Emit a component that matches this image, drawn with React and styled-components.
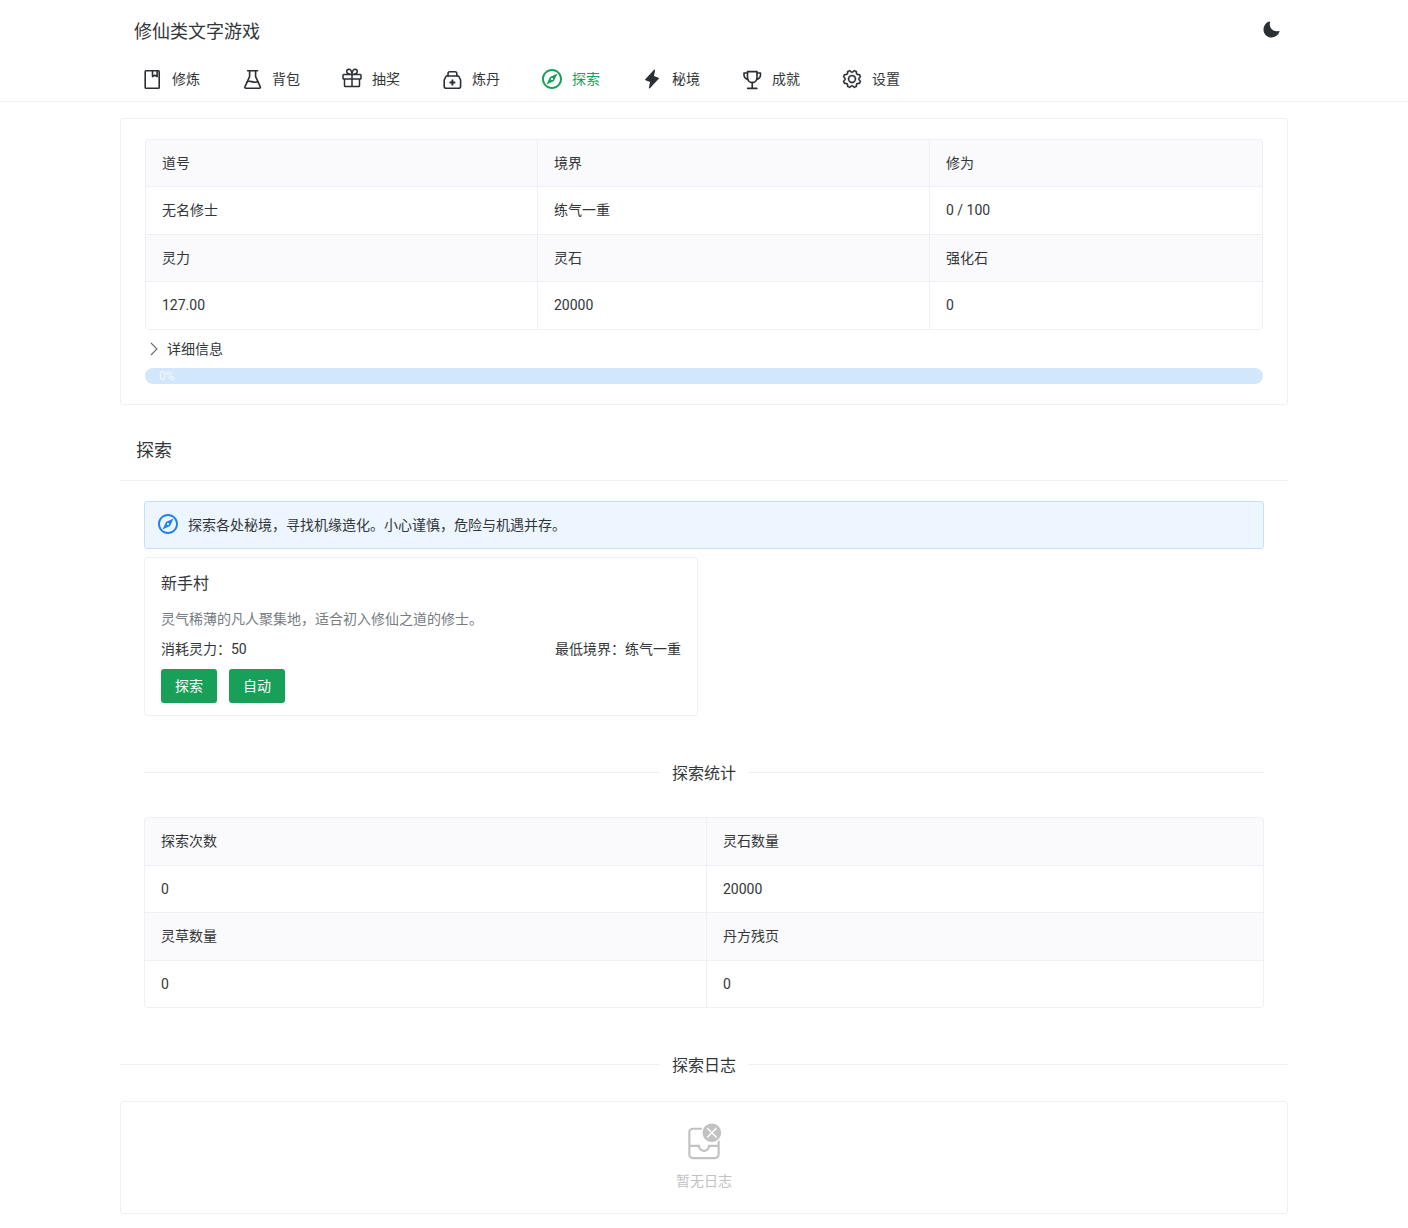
import React from "react";
import styled, { createGlobalStyle } from "styled-components";
import { PiGift, PiGear, PiLightningFill, PiMoonFill } from "react-icons/pi";
import { MdOutlineExplore } from "react-icons/md";

const GlobalStyle = createGlobalStyle`
  html, body {
    margin: 0;
    padding: 0;
    background: #fff;
    color: #333639;
    font-family: Roboto, "Noto Sans CJK SC", sans-serif;
    font-size: 14px;
  }
  * { box-sizing: border-box; }
`;

const Header = styled.header`
  height: 102px;
  border-bottom: 1px solid #efeff5;
`;

const HeaderInner = styled.div`
  width: 1168px;
  margin: 0 auto;
`;

const TitleRow = styled.div`
  display: flex;
  justify-content: space-between;
  align-items: center;
  height: 56px;
  padding: 8px 7px 0 14px;
`;

const Title = styled.div`
  font-size: 18px;
  line-height: 34px;
`;

const ThemeButton = styled.div`
  display: flex;
  margin-top: -4px;
  font-size: 20px;
  color: #2b2f33;
`;

const Nav = styled.nav`
  display: flex;
  height: 45px;
`;

const NavItem = styled.div`
  display: flex;
  align-items: center;
  gap: 8px;
  width: 100px;
  padding: 0 20px;
  line-height: 22px;
  color: ${(p) => (p.$active ? "#18a058" : "#333639")};
  svg {
    flex: none;
    font-size: 24px;
    color: ${(p) => (p.$active ? "#18a058" : "#2b2f33")};
  }
`;

const Glyph = styled.svg`
  width: 1em;
  height: 1em;
  fill: none;
  stroke: currentColor;
  stroke-width: 1.6;
  stroke-linejoin: round;
  stroke-linecap: round;
`;

const FlashIcon = styled(PiLightningFill)`
  && {
    font-size: 20px;
    margin: 0 2px;
  }
`;

const GearIcon = styled(PiGear)`
  && {
    font-size: 22px;
    margin: 0 1px;
    stroke-width: 3;
  }
`;

const Main = styled.main`
  width: 1168px;
  margin: 0 auto;
  padding: 16px 0 14px;
`;

const Card = styled.section`
  border: 1px solid #efeff5;
  border-radius: 3px;
  padding: 20px 24px;
`;

const Table = styled.div`
  display: grid;
  grid-template-columns: ${(p) => p.$columns};
  border: 1px solid #efeff5;
  border-radius: 3px;
  overflow: hidden;
`;

const Cell = styled.div`
  padding: 12px 16px;
  line-height: 22.4px;
  background: ${(p) => (p.$head ? "#fafafc" : "#fff")};
  border-bottom: ${(p) => (p.$last ? "none" : "1px solid #efeff5")};
  border-right: ${(p) => (p.$end ? "none" : "1px solid #efeff5")};
`;

const Collapse = styled.div`
  display: flex;
  align-items: center;
  gap: 9px;
  margin-top: 8px;
  padding-left: 5px;
  line-height: 22.4px;
  svg {
    color: #666a6e;
  }
`;

const ProgressRail = styled.div`
  display: flex;
  align-items: center;
  height: 16px;
  margin-top: 8px;
  padding-left: 14px;
  border-radius: 8px;
  background: #d2e6fc;
`;

const ProgressText = styled.span`
  font-size: 12px;
  color: rgba(255, 255, 255, 0.75);
`;

const PageHeading = styled.h2`
  margin: 24px 0 0;
  padding: 8px 16px 15px;
  font-size: 18px;
  font-weight: 400;
  line-height: 28px;
  border-bottom: 1px solid #efeff5;
`;

const Body = styled.div`
  padding: 20px 24px;
`;

const Alert = styled.div`
  display: flex;
  align-items: center;
  gap: 8px;
  height: 48px;
  padding: 0 11px 2px;
  border: 1px solid #c7dffb;
  border-radius: 3px;
  background: #edf5fe;
  svg {
    font-size: 24px;
    color: #2080f0;
  }
`;

const AreaGrid = styled.div`
  display: grid;
  grid-template-columns: 1fr 1fr;
  gap: 12px;
  margin-top: 8px;
`;

const AreaCard = styled.div`
  padding: 14px 16px 12px;
  border: 1px solid #efeff5;
  border-radius: 3px;
`;

const AreaName = styled.div`
  font-size: 16px;
  line-height: 24px;
`;

const AreaDesc = styled.div`
  margin-top: 12px;
  line-height: 22px;
  color: #767c82;
`;

const AreaMeta = styled.div`
  display: flex;
  justify-content: space-between;
  margin-top: 8px;
  line-height: 22px;
`;

const ButtonRow = styled.div`
  display: flex;
  gap: 12px;
  margin-top: 9px;
`;

const Button = styled.button`
  width: 56px;
  height: 34px;
  padding: 0 0 2px;
  border: none;
  border-radius: 3px;
  background: #18a058;
  color: #fff;
  font: inherit;
`;

const Divider = styled.div`
  display: flex;
  align-items: center;
  gap: 12px;
  margin: ${(p) => p.$margin};
  font-size: 16px;
  line-height: 24px;
  &::before,
  &::after {
    content: "";
    flex: 1;
    height: 1px;
    background: #efeff5;
  }
`;

const DividerLabel = styled.span`
  transform: translateY(2px);
`;

const EmptyCard = styled.section`
  display: flex;
  flex-direction: column;
  align-items: center;
  padding: 20px 24px 21px;
  border: 1px solid #efeff5;
  border-radius: 3px;
  color: #c2c2c2;
`;

const EmptyText = styled.div`
  margin-top: 8px;
  line-height: 22px;
`;

function BookIcon() {
  return (
    <Glyph viewBox="0 0 24 24">
      <rect x="5.2" y="3.8" width="14" height="17.4" rx="0.8" />
      <path d="M12.5 4v5.6l2.3-1.5 2.3 1.5V4" />
    </Glyph>
  );
}

function FlaskIcon() {
  return (
    <Glyph viewBox="0 0 24 24">
      <path d="M7.6 3.8h10" />
      <path d="M9.6 3.8v5.8L4.9 19.8c-.4 .8 .2 1.4 1 1.4h13.4c.8 0 1.4-.6 1-1.4l-4.7-10.2V3.8" />
      <path d="M7.4 14.6c3-1.8 5.6 2 10.6 .2" />
    </Glyph>
  );
}

function MedkitIcon() {
  return (
    <Glyph viewBox="0 0 24 24">
      <path d="M6.2 9h12.4l2 4v6.2a2 2 0 0 1-2 2H6.2a2 2 0 0 1-2-2V13z" />
      <path d="M8 9V6.6c0-1 .8-1.8 1.8-1.8h5.2c1 0 1.8 .8 1.8 1.8V9" />
      <path d="M12.4 12.6v5.8M9.5 15.5h5.8" strokeWidth="1.9" strokeLinecap="butt" />
    </Glyph>
  );
}

function TrophyIcon() {
  return (
    <Glyph viewBox="0 0 24 24">
      <path d="M7.5 4.6H17v6a4.75 5 0 0 1-9.5 0z" />
      <path d="M7.5 6H4v2c0 2.4 1.6 3.8 3.9 4.4M17 6h3.5v2c0 2.4-1.6 3.8-3.9 4.4" />
      <path d="M12.25 15.6v5.6M7.6 21.4h9.3" />
    </Glyph>
  );
}

const navItems = [
  ["修炼", BookIcon],
  ["背包", FlaskIcon],
  ["抽奖", PiGift],
  ["炼丹", MedkitIcon],
  ["探索", MdOutlineExplore],
  ["秘境", FlashIcon],
  ["成就", TrophyIcon],
  ["设置", GearIcon],
];

const playerRows = [
  ["道号", "境界", "修为"],
  ["无名修士", "练气一重", "0 / 100"],
  ["灵力", "灵石", "强化石"],
  ["127.00", "20000", "0"],
];

const statRows = [
  ["探索次数", "灵石数量"],
  ["0", "20000"],
  ["灵草数量", "丹方残页"],
  ["0", "0"],
];

function InfoTable({ rows, columns }) {
  return (
    <Table $columns={columns}>
      {rows.map((row, i) =>
        row.map((text, j) => (
          <Cell key={i + "-" + j} $head={i % 2 === 0} $last={i === rows.length - 1} $end={j === row.length - 1}>
            {text}
          </Cell>
        ))
      )}
    </Table>
  );
}

function EmptyIcon() {
  return (
    <svg width="40" height="40" viewBox="0 0 28 28" fill="none">
      <path
        d="M26 7.5C26 11.0899 23.0899 14 19.5 14C15.9101 14 13 11.0899 13 7.5C13 3.91015 15.9101 1 19.5 1C23.0899 1 26 3.91015 26 7.5ZM16.8536 4.14645C16.6583 3.95118 16.3417 3.95118 16.1464 4.14645C15.9512 4.34171 15.9512 4.65829 16.1464 4.85355L18.7929 7.5L16.1464 10.1464C15.9512 10.3417 15.9512 10.6583 16.1464 10.8536C16.3417 11.0488 16.6583 11.0488 16.8536 10.8536L19.5 8.20711L22.1464 10.8536C22.3417 11.0488 22.6583 11.0488 22.8536 10.8536C23.0488 10.6583 23.0488 10.3417 22.8536 10.1464L20.2071 7.5L22.8536 4.85355C23.0488 4.65829 23.0488 4.34171 22.8536 4.14645C22.6583 3.95118 22.3417 3.95118 22.1464 4.14645L19.5 6.79289L16.8536 4.14645Z"
        fill="currentColor"
      />
      <path
        d="M25 22.75V12.5991C24.5572 13.0765 24.053 13.4961 23.5 13.8454V16H17.5L17.3982 16.0068C17.0322 16.0565 16.75 16.3703 16.75 16.75C16.75 18.2688 15.5188 19.5 14 19.5C12.4812 19.5 11.25 18.2688 11.25 16.75L11.2432 16.6482C11.1935 16.2822 10.8797 16 10.5 16H4.5V7.25C4.5 6.2835 5.2835 5.5 6.25 5.5H12.2696C12.4146 4.97463 12.6153 4.47237 12.865 4H6.25C4.45507 4 3 5.45507 3 7.25V22.75C3 24.5449 4.45507 26 6.25 26H21.75C23.5449 26 25 24.5449 25 22.75ZM4.5 22.75V17.5H9.81597L9.85751 17.7041C10.2905 19.5919 11.9808 21 14 21L14.215 20.9947C16.2095 20.8953 17.842 19.4209 18.184 17.5H23.5V22.75C23.5 23.7165 22.7165 24.5 21.75 24.5H6.25C5.2835 24.5 4.5 23.7165 4.5 22.75Z"
        fill="currentColor"
      />
    </svg>
  );
}

function App() {
  return (
    <>
      <GlobalStyle />
      <Header>
        <HeaderInner>
          <TitleRow>
            <Title>修仙类文字游戏</Title>
            <ThemeButton>
              <PiMoonFill />
            </ThemeButton>
          </TitleRow>
          <Nav>
            {navItems.map(([label, Icon]) => (
              <NavItem key={label} $active={label === "探索"}>
                <Icon />
                {label}
              </NavItem>
            ))}
          </Nav>
        </HeaderInner>
      </Header>
      <Main>
        <Card>
          <InfoTable rows={playerRows} columns="392px 392px 1fr" />
          <Collapse>
            <svg width="8" height="14" viewBox="0 0 8 14" fill="none">
              <path d="M1 1l6 6-6 6" stroke="currentColor" strokeWidth="1.1" />
            </svg>
            详细信息
          </Collapse>
          <ProgressRail>
            <ProgressText>0%</ProgressText>
          </ProgressRail>
        </Card>
        <PageHeading>探索</PageHeading>
        <Body>
          <Alert>
            <MdOutlineExplore />
            探索各处秘境，寻找机缘造化。小心谨慎，危险与机遇并存。
          </Alert>
          <AreaGrid>
            <AreaCard>
              <AreaName>新手村</AreaName>
              <AreaDesc>灵气稀薄的凡人聚集地，适合初入修仙之道的修士。</AreaDesc>
              <AreaMeta>
                <span>消耗灵力：50</span>
                <span>最低境界：练气一重</span>
              </AreaMeta>
              <ButtonRow>
                <Button>探索</Button>
                <Button>自动</Button>
              </ButtonRow>
            </AreaCard>
          </AreaGrid>
          <Divider $margin="44px 0 33.4px">
            <DividerLabel>探索统计</DividerLabel>
          </Divider>
          <InfoTable rows={statRows} columns="562px 1fr" />
        </Body>
        <Divider $margin="24px 0 25px">
          <DividerLabel>探索日志</DividerLabel>
        </Divider>
        <EmptyCard>
          <EmptyIcon />
          <EmptyText>暂无日志</EmptyText>
        </EmptyCard>
      </Main>
    </>
  );
}

export default App;
